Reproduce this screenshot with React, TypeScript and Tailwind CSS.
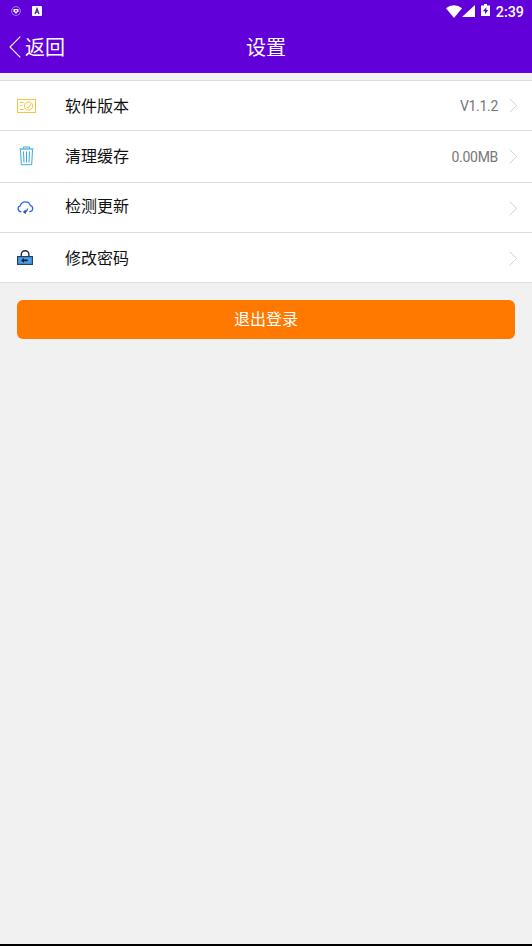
import type { ReactNode } from 'react';
import clsx from 'clsx';

interface SettingItem {
  label: string;
  value?: string;
  icon: ReactNode;
  rowClass: string;
  labelClass: string;
}

const VersionIcon = () => (
  <svg width="19" height="14" viewBox="0 0 19 14" fill="none" stroke="#f4c63d">
    <rect x="0.5" y="0.5" width="18" height="13" />
    <path d="M3 3.5h3.5M3 6.5h2M3 10.5h3.5" />
    <circle cx="11.5" cy="7" r="4.2" />
    <path d="M9.2 8l1.8 1 3-4" />
  </svg>
);

const TrashIcon = () => (
  <svg className="-mt-0.5 ml-0.5" width="15" height="20" viewBox="0 0 15 20" fill="none" stroke="#35a9dc">
    <path d="M4.5 2.5V1h6v1.5" />
    <path d="M0.5 3h14" strokeWidth="1.2" />
    <path d="M1.5 3.5l0.8 15.2h10.4l0.8-15.2" />
    <path d="M4.5 5.5L5 16.5M7.5 5.5v11M10.5 5.5L10 16.5" />
  </svg>
);

const CloudIcon = () => (
  <svg className="-mt-px" width="17" height="14" viewBox="0 0 17 14" fill="none">
    <path
      d="M4.5 10.6H4a2.9 2.9 0 0 1-.7-5.7 5.2 5.2 0 0 1 10.1-.2 3 3 0 0 1-.4 5.9h-.8"
      stroke="#2b6be3"
      strokeWidth="1.3"
    />
    <path d="M10.2 7.5c.4 1.8-.3 3-2.4 3.4" stroke="#34509f" strokeWidth="1.2" />
    <path d="M8.8 8.6v4.6L5.8 11z" fill="#34509f" />
  </svg>
);

const LockIcon = () => (
  <svg className="-mt-px" width="16" height="15" viewBox="0 0 16 15" fill="none">
    <path d="M4.3 7V4.5a3.8 3.8 0 0 1 7.6 0V7" stroke="#1b2b3c" strokeWidth="1.4" />
    <rect x="0.6" y="6.6" width="14.8" height="7.8" fill="#4a9bea" stroke="#1d3b59" strokeWidth="1.1" />
    <path d="M4 10.4l2.9-2.3v1.5h3.8v1.6H6.9v1.5z" fill="#102030" />
  </svg>
);

const items: SettingItem[] = [
  { label: '软件版本', value: 'V1.1.2', icon: <VersionIcon />, rowClass: 'h-[50px]', labelClass: 'pb-0.5' },
  { label: '清理缓存', value: '0.00MB', icon: <TrashIcon />, rowClass: 'h-[52px]', labelClass: 'pb-[3px]' },
  { label: '检测更新', icon: <CloudIcon />, rowClass: 'h-[50px] pt-px', labelClass: 'pb-[6px]' },
  { label: '修改密码', icon: <LockIcon />, rowClass: 'h-[50px] pt-px', labelClass: 'pb-0.5' },
];

const StatusBar = () => (
  <div className="flex h-[23px] items-center justify-between pl-[11px] pr-2">
    <div className="flex items-center gap-[11px] pb-px">
      <svg width="10" height="10" viewBox="0 0 10 10" fill="none">
        <circle cx="5" cy="5" r="4.4" stroke="#b79af0" strokeWidth="0.8" />
        <path d="M2.5 3h5v2.2L5 7.8 2.5 5.2z" fill="#fff" />
        <path d="M5 3.8v2M4 4.8h2" stroke="#6200d9" strokeWidth="0.7" />
      </svg>
      <svg width="10" height="10" viewBox="0 0 10 10" fill="none">
        <rect width="10" height="10" rx="1" fill="#fff" />
        <path d="M3 8l2-5.5L7 8M3.6 6.2h2.8" stroke="#4d20a8" strokeWidth="1.2" />
      </svg>
    </div>
    <div className="flex items-center">
      <svg width="16" height="13" viewBox="0 0 16 13" fill="#fff">
        <path d="M0 3.2a12.2 12.2 0 0 1 16 0L8 13z" />
      </svg>
      <svg width="13" height="12" viewBox="0 0 13 12" fill="#fff">
        <path d="M13 0v12H0z" />
      </svg>
      <svg className="ml-[6px] -mt-[3px]" width="9" height="12" viewBox="0 0 9 13" preserveAspectRatio="none">
        <path d="M3 0h3v1.5h3V13H0V1.5h3z" fill="#fff" />
        <path d="M5.4 3.2L2 7.8h2v3.2l3.2-4.6h-2z" fill="#6200d9" />
      </svg>
      <span className="ml-[6px] pt-px font-[Roboto] text-[14.3px] font-medium leading-none">2:39</span>
    </div>
  </div>
);

const SettingRow = ({ label, value, icon, rowClass, labelClass }: SettingItem) => (
  <li className={clsx('flex items-center border-b border-[#dedede] bg-white pl-[17px] pr-[14px]', rowClass)}>
    <span className="flex w-[19px] justify-start">{icon}</span>
    <span className={clsx('ml-[29px] flex-1 text-base leading-none text-[#111]', labelClass)}>{label}</span>
    {value && (
      <span className="font-[Roboto] text-sm leading-none tracking-[-0.3px] text-[#777]">{value}</span>
    )}
    <svg className="ml-[11px]" width="9" height="15" viewBox="0 0 9 15" fill="none" stroke="#d2d2d2">
      <path d="M0.7 0.7l7 6.8-7 6.8" />
    </svg>
  </li>
);

export default function App() {
  return (
    <div className="flex h-[946px] w-[532px] flex-col border-b-2 border-black bg-[#f1f1f1] font-['Noto_Sans_CJK_SC',sans-serif]">
      <header className="h-[73px] bg-[#6200d9] text-white">
        <StatusBar />
        <div className="grid h-12 grid-cols-3 items-center text-xl leading-none">
          <button className="flex items-center gap-1 pl-[9px]">
            <svg width="12" height="22" viewBox="0 0 12 22" fill="none" stroke="#fff" strokeWidth="1.1">
              <path d="M11.3 0.7L1 11l10.3 10.3" />
            </svg>
            返回
          </button>
          <h1 className="text-center">设置</h1>
        </div>
      </header>

      <ul className="mt-[7px] border-t border-[#dedede]">
        {items.map((item) => (
          <SettingRow key={item.label} {...item} />
        ))}
      </ul>

      <button className="mx-[17px] mt-[17px] h-[39px] rounded-md bg-[#ff7800] pb-[3px] text-base leading-none text-white">
        退出登录
      </button>
    </div>
  );
}
